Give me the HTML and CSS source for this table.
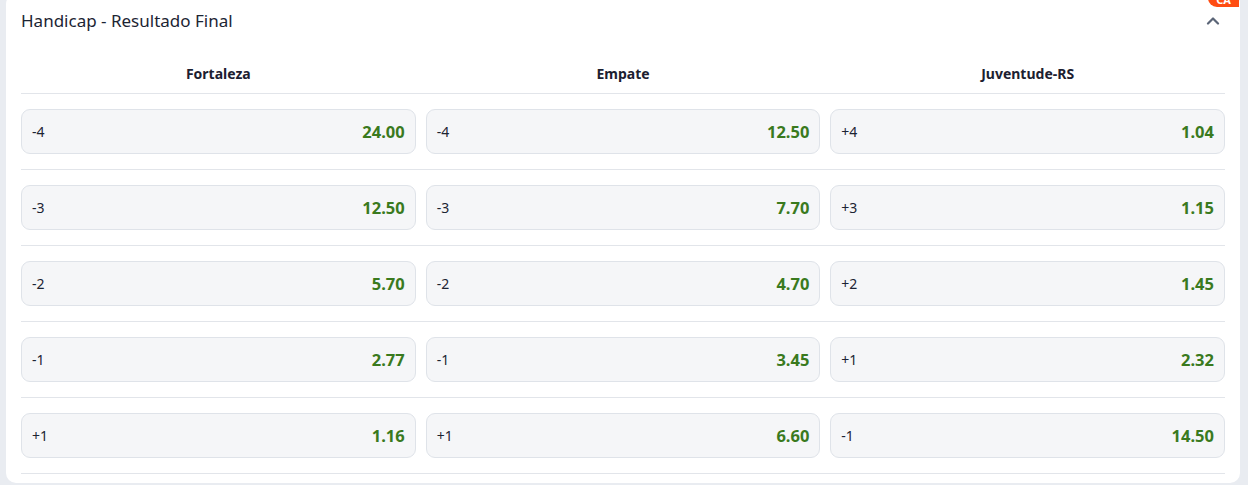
FILE: index.html
```html
<!DOCTYPE html>
<html lang="pt">
<head>
<meta charset="utf-8">
<link rel="stylesheet" href="styles.css">
</head>
<body>
<div class="page">
  <section class="card">
    <span class="badge">CA</span>
    <header class="card-head">
      <h2 class="title">Handicap - Resultado Final</h2>
      <svg class="chev" width="14" height="9" viewBox="0 0 14 9"><path d="M2 7.5 L7 2.5 L12 7.5" fill="none" stroke="#5b6577" stroke-width="2.2" stroke-linecap="round" stroke-linejoin="round"/></svg>
    </header>
    <div class="cols">
      <div class="col-name">Fortaleza</div>
      <div class="col-name">Empate</div>
      <div class="col-name">Juventude-RS</div>
    </div>
    <div class="row">
      <button class="odd"><span class="lbl">-4</span><span class="val">24.00</span></button>
      <button class="odd"><span class="lbl">-4</span><span class="val">12.50</span></button>
      <button class="odd"><span class="lbl">+4</span><span class="val">1.04</span></button>
    </div>
    <div class="row">
      <button class="odd"><span class="lbl">-3</span><span class="val">12.50</span></button>
      <button class="odd"><span class="lbl">-3</span><span class="val">7.70</span></button>
      <button class="odd"><span class="lbl">+3</span><span class="val">1.15</span></button>
    </div>
    <div class="row">
      <button class="odd"><span class="lbl">-2</span><span class="val">5.70</span></button>
      <button class="odd"><span class="lbl">-2</span><span class="val">4.70</span></button>
      <button class="odd"><span class="lbl">+2</span><span class="val">1.45</span></button>
    </div>
    <div class="row">
      <button class="odd"><span class="lbl">-1</span><span class="val">2.77</span></button>
      <button class="odd"><span class="lbl">-1</span><span class="val">3.45</span></button>
      <button class="odd"><span class="lbl">+1</span><span class="val">2.32</span></button>
    </div>
    <div class="row">
      <button class="odd"><span class="lbl">+1</span><span class="val">1.16</span></button>
      <button class="odd"><span class="lbl">+1</span><span class="val">6.60</span></button>
      <button class="odd"><span class="lbl">-1</span><span class="val">14.50</span></button>
    </div>
  </section>
</div>
</body>
</html>
```

FILE: styles.css
```css
* { box-sizing: border-box; }
html, body {
  margin: 0;
  padding: 0;
  background: #e9ecf1;
  height: 485px;
  overflow: hidden;
  font-family: "Noto Sans", "Open Sans", sans-serif;
}
.page {
  padding: 0 8px 0 6px;
}
.card {
  position: relative;
  background: #ffffff;
  margin-top: -6px;
  border-radius: 10px;
  padding: 6px 15px 9px 15px;
}
.badge {
  position: absolute;
  top: -1px;
  right: 1px;
  height: 14px;
  padding: 0 8px;
  background: #ff4d12;
  color: #fff;
  font-size: 11px;
  font-weight: 700;
  line-height: 14px;
  border-radius: 0 0 0 9px;
}
.card-head {
  display: flex;
  align-items: center;
  justify-content: space-between;
  height: 40px;
}
.title {
  margin: 0;
  font-size: 17px;
  font-weight: 400;
  color: #1c2433;
}
.chev {
  margin-right: 5px;
}
.cols {
  display: grid;
  grid-template-columns: repeat(3, 1fr);
  gap: 10px;
  height: 54px;
  align-items: center;
  padding-top: 13px;
  border-bottom: 1px solid #e2e5ea;
}
.col-name {
  text-align: center;
  font-size: 14px;
  font-weight: 700;
  color: #1c2030;
}
.row {
  display: grid;
  grid-template-columns: repeat(3, 1fr);
  gap: 10px;
  padding: 15px 0;
  border-bottom: 1px solid #e2e5ea;
}
.odd {
  display: flex;
  align-items: center;
  justify-content: space-between;
  height: 45px;
  padding: 0 10px;
  background: #f5f6f8;
  border: 1px solid #dfe3e9;
  border-radius: 9px;
  font-family: inherit;
  cursor: pointer;
}
.lbl {
  font-size: 14px;
  color: #1c2433;
}
.val {
  font-size: 16.5px;
  font-weight: 700;
  color: #3a7a1e;
}
```
